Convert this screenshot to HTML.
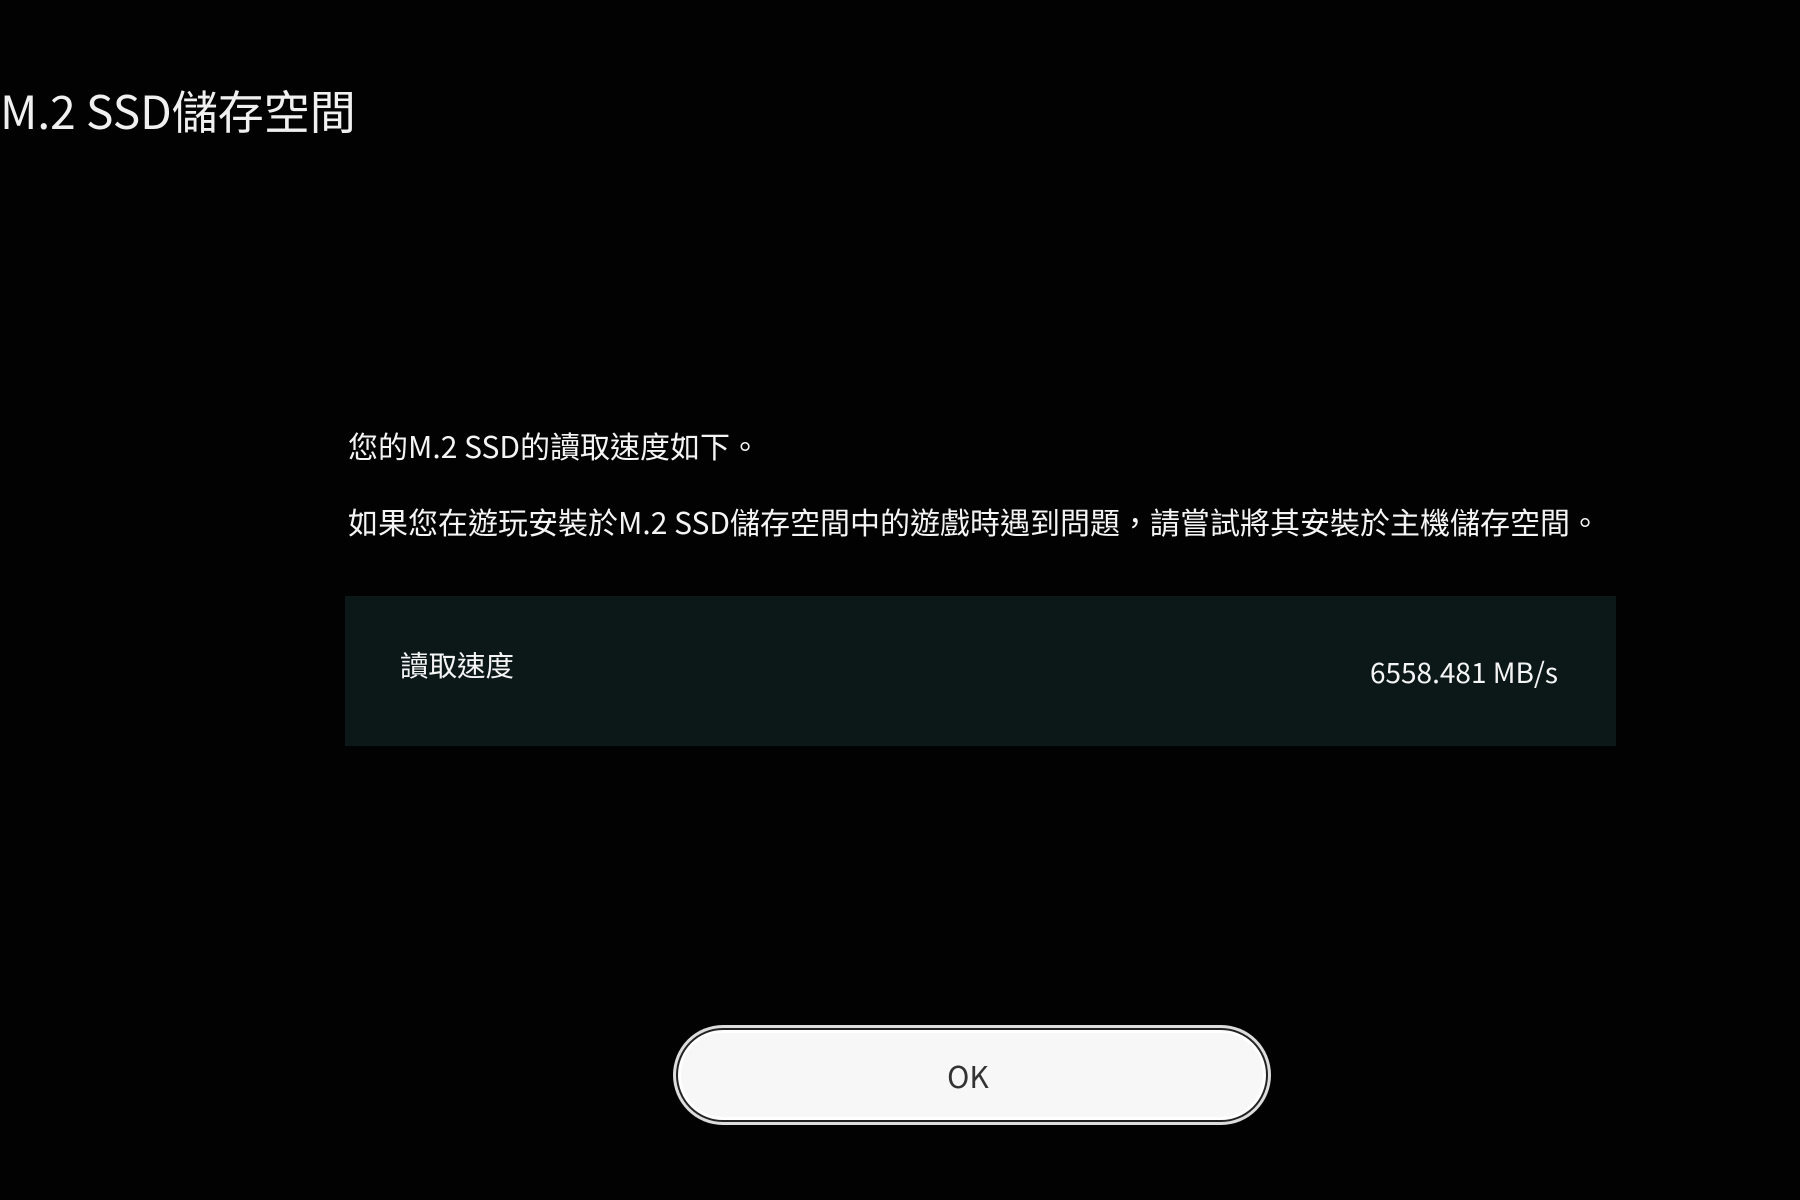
<!DOCTYPE html>
<html><head><meta charset="utf-8"><style>
html,body{margin:0;padding:0;background:#020203;width:1800px;height:1200px;overflow:hidden;position:relative;font-family:"Noto Sans CJK TC","Liberation Sans",sans-serif;color:#f4f4f4}
.t{position:absolute;white-space:nowrap;line-height:1}
</style></head><body>
<div class="t" style="left:0;top:87px;font-size:46px;color:#f0f0f0">M.2 SSD儲存空間</div>
<div class="t" style="left:348px;top:430px;font-size:30px">您的M.2 SSD的讀取速度如下。</div>
<div class="t" style="left:348px;top:506px;font-size:30px">如果您在遊玩安裝於M.2 SSD儲存空間中的遊戲時遇到問題，請嘗試將其安裝於主機儲存空間。</div>
<div style="position:absolute;left:345px;top:596px;width:1271px;height:150px;background:#0c1818"></div>
<div class="t" style="left:400px;top:651px;font-size:28.5px">讀取速度</div>
<div class="t" style="right:242px;top:658px;font-size:28px">6558.481 MB/s</div>
<div style="position:absolute;left:678px;top:1030px;width:582px;height:84px;border-radius:46px;background:#f7f7f7;border:3px solid #fff;box-shadow:0 0 0 2px #222,0 0 0 5px #ddd"></div>
<div class="t" style="left:0;width:1936px;text-align:center;top:1060px;font-size:30px;color:#333">OK</div>
</body></html>
